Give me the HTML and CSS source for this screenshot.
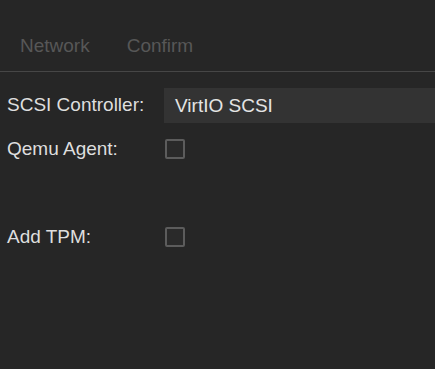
FILE: index.html
```html
<!DOCTYPE html>
<html lang="en">
<head>
    <meta charset="UTF-8">
    <meta name="viewport" content="width=device-width, initial-scale=1.0">
    <title>Create VM - System</title>
    <link rel="stylesheet" href="styles.css">
</head>
<body>

<nav class="tabs">
    <span class="tab">Network</span>
    <span class="tab">Confirm</span>
</nav>

<div class="form">
    <label class="label" for="scsihw">SCSI Controller:</label>
    <div class="select" id="scsihw">VirtIO SCSI</div>

    <label class="label" for="agent">Qemu Agent:</label>
    <div class="field"><input type="checkbox" id="agent" class="check"></div>

    <!-- empty row, kept for spacing -->
    <div class="label"></div>
    <div class="field"></div>

    <label class="label" for="tpm">Add TPM:</label>
    <div class="field"><input type="checkbox" id="tpm" class="check"></div>
</div>

</body>
</html>
```

FILE: styles.css
```css
body {
    margin: 0;
    background-color: #262626;
    color: #dedede;
    font-family: 'Liberation Sans', Arial, sans-serif;
    font-size: 19px;
    overflow: hidden;
}
.tabs {
    display: flex;
    gap: 37px;
    height: 72px;
    box-sizing: border-box;
    padding: 35px 0 0 20px;
    line-height: 22px;
    border-bottom: 1px solid #464646;
}
.tab {
    color: #575757;
}
.form {
    display: grid;
    grid-template-columns: 157px 1fr;
    grid-auto-rows: 44px;
    align-items: center;
    padding: 11px 0 0 7px;
}
.label {
    line-height: 22px;
}
.select {
    height: 35px;
    line-height: 35px;
    padding-left: 11px;
    background-color: #333333;
    color: #e4e4e4;
}
.field {
    display: flex;
    align-items: center;
}
.check {
    appearance: none;
    width: 20px;
    height: 20px;
    margin: 0 0 0 1px;
    border: 2px solid #5c5c5c;
    border-radius: 2px;
    background-color: #2a2a2a;
}
```
